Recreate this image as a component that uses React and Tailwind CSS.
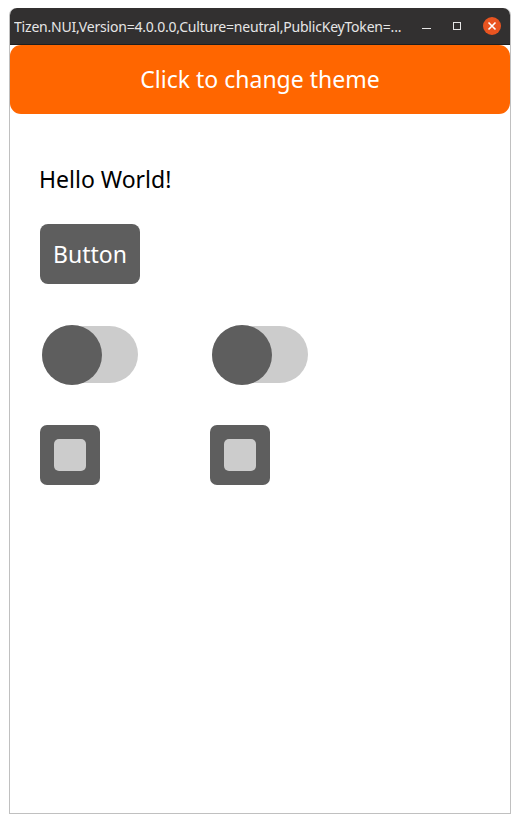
import React, { useState } from "react";

const Toggle = ({ on, onClick }) => (
    <button onClick={onClick} className="relative w-[96px] h-[60px] flex items-center">
        <span className="absolute left-0 right-0 top-[1px] h-[57px] rounded-full bg-[#cccccc]"></span>
        <span
            className={`absolute top-0 w-[60px] h-[60px] rounded-full bg-[#5e5e5e] ${on ? "right-0" : "left-0"}`}
        ></span>
    </button>
);

const Check = ({ checked, onClick }) => (
    <button
        onClick={onClick}
        className="w-[60px] h-[60px] rounded-[7px] bg-[#5e5e5e] flex items-center justify-center"
    >
        <span className={`w-[32px] h-[32px] rounded-[5px] ${checked ? "bg-white" : "bg-[#cccccc]"}`}></span>
    </button>
);

export default function App() {
    const [dark, setDark] = useState(false);
    const [toggles, setToggles] = useState([false, false]);
    const [checks, setChecks] = useState([false, false]);

    return (
        <div className="w-[520px] h-[823px] bg-white pt-[8px] px-[9px] pb-[9px] font-['Noto_Sans',sans-serif]">
            <div className="h-full flex flex-col border border-[#c0c0c0] border-t-0 rounded-t-[7px]">
                {/* title bar */}
                <div className="h-[37px] flex items-center pl-[4px] pr-[9px] bg-[#323030] rounded-t-[7px] border-b border-[#1e1e1e]">
                    <span className="flex-1 truncate text-[14px] text-[#e6e6e6] tracking-[-0.2px]">
                        Tizen.NUI,Version=4.0.0.0,Culture=neutral,PublicKeyToken=...
                    </span>
                    <div className="flex items-center gap-[22px] ml-[6px]">
                        <span className="w-[9px] h-[1.5px] bg-[#e6e6e6] mt-[5px]"></span>
                        <span className="w-[8px] h-[8px] border border-[#e6e6e6]"></span>
                        <span className="w-[18px] h-[18px] rounded-full bg-[#e95420] flex items-center justify-center">
                            <svg width="10" height="10" viewBox="0 0 10 10">
                                <path d="M1.5 1.5 L8.5 8.5 M8.5 1.5 L1.5 8.5" stroke="#fff" strokeWidth="1.6" />
                            </svg>
                        </span>
                    </div>
                </div>

                {/* theme button */}
                <button
                    onClick={() => setDark(!dark)}
                    className="h-[69px] rounded-[11px] bg-[#ff6600] text-white text-[23px] flex items-center justify-center"
                >
                    Click to change theme
                </button>

                <div className={`flex-1 pl-[28px] pt-[50px] ${dark ? "bg-[#222]" : "bg-white"}`}>
                    <p className={`text-[23px] leading-[30px] ml-px ${dark ? "text-white" : "text-black"}`}>Hello World!</p>

                    <button className="mt-[30px] ml-[2px] w-[100px] h-[60px] rounded-[8px] bg-[#5e5e5e] text-white text-[23px]">
                        Button
                    </button>

                    <div className="mt-[41px] ml-[4px] flex gap-[74px]">
                        {toggles.map((on, i) => (
                            <Toggle
                                key={i}
                                on={on}
                                onClick={() => setToggles(toggles.map((t, j) => (j === i ? !t : t)))}
                            />
                        ))}
                    </div>

                    <div className="mt-[40px] ml-[2px] flex gap-[110px]">
                        {checks.map((c, i) => (
                            <Check
                                key={i}
                                checked={c}
                                onClick={() => setChecks(checks.map((t, j) => (j === i ? !t : t)))}
                            />
                        ))}
                    </div>
                </div>
            </div>
        </div>
    );
}
